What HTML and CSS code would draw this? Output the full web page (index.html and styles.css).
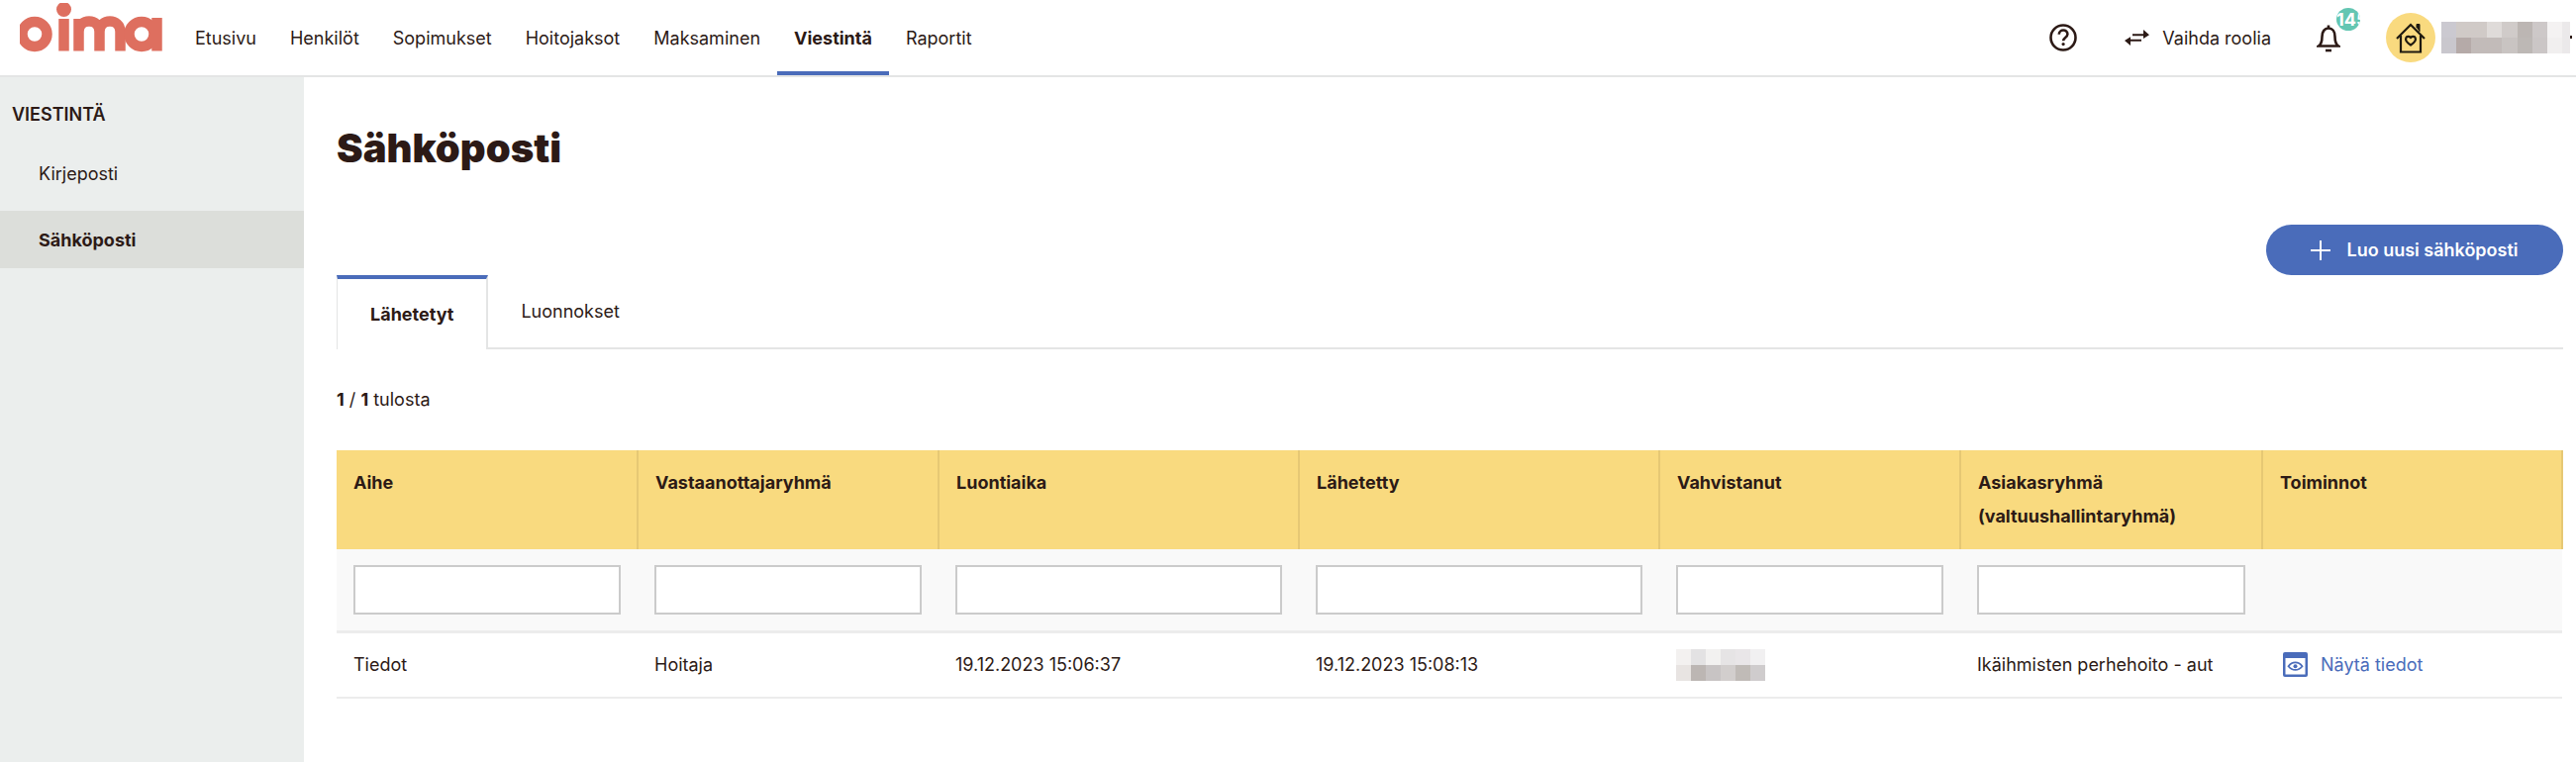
FILE: index.html
```html
<!DOCTYPE html>
<html lang="fi">
<head>
    <meta charset="UTF-8">
    <meta name="viewport" content="width=device-width, initial-scale=1.0">
    <title>Sähköposti</title>
    <link rel="stylesheet" href="styles.css">
</head>
<body>
    <header class="topbar">
        <a class="logo" href="#" aria-label="oima">
            <svg width="144" height="50" viewBox="20 4 144 50" fill="none" stroke="#de6f5f" stroke-width="10.5">
                <circle cx="35" cy="35.5" r="12.5"/>
                <circle cx="64.5" cy="10.5" r="7.5" fill="#de6f5f" stroke="none"/>
                <path d="M64.5 20V52.5"/>
                <path d="M79.5 52.5V20M79.5 33c0-14 21-14 21 0V52.5M100.500 33c0-14 21-14 21 0V52.500"/>
                <circle cx="143" cy="35.500" r="12.500"/>
                <path d="M158.500 19V52.500"/>
            </svg>
        </a>
        <nav class="mainnav">
            <a href="#">Etusivu</a>
            <a href="#">Henkilöt</a>
            <a href="#">Sopimukset</a>
            <a href="#">Hoitojaksot</a>
            <a href="#">Maksaminen</a>
            <a href="#" class="active">Viestintä</a>
            <a href="#">Raportit</a>
        </nav>
        <div class="usertools">
            <svg class="help" width="30" height="30" viewBox="0 0 30 30" fill="none" stroke="#2c1a16" stroke-width="2.6">
                <circle cx="15" cy="15" r="12.500"/>
                <path d="M10.800 11.800c0-5.600 8.600-5.600 8.600-.2 0 3.400-4.300 3.400-4.300 6.600"/>
                <circle cx="15.100" cy="21.600" r="1.600" fill="#2c1a16" stroke="none"/>
            </svg>
            <a href="#" class="rolelink">
                <svg width="25" height="18" viewBox="0 0 25 18" fill="#2c1a16">
                    <path d="M8 5.200H19V1L25 6.300 19 10V7.300H8Z"/>
                    <path d="M17 10.700V12.800H6V17L0 12 6 8.200V10.700Z"/>
                </svg>
                Vaihda roolia
            </a>
            <div class="bellwrap">
                <svg width="24" height="29" viewBox="0 0 24 29" fill="none" stroke="#2c1a16" stroke-width="2.600">
                    <path d="M2 22.500c3-2 3.500-5 3.500-9.500 0-5 2.500-8.500 6.500-8.500s6.500 3.500 6.500 8.500c0 4.500.5 7.500 3.500 9.500Z"/>
                    <path d="M12 1.500V4"/>
                    <path d="M9 27h6"/>
                </svg>
                <span class="badge">145</span>
            </div>
            <div class="avatar">
                <svg width="30" height="33" viewBox="0 0 30 33" fill="none" stroke="#1f1a10" stroke-width="2.200">
                    <path d="M1 17 15 3 29 17"/>
                    <path d="M5 14V30.500H25V14"/>
                    <path d="M21 6V2.500H24V10" fill="#1f1a10" stroke-width="1"/>
                    <path d="M15 23.500c-9-6-3.500-11 0-7.500 3.500-3.500 9 1.500 0 7.500Z"/>
                </svg>
            </div>
            <div class="blurname"></div>
            <span class="caret"></span>
        </div>
    </header>

    <div class="page">
        <aside class="sidebar">
            <h2>VIESTINTÄ</h2>
            <a href="#">Kirjeposti</a>
            <a href="#" class="active">Sähköposti</a>
        </aside>

        <main class="content">
            <h1>Sähköposti</h1>
            <div class="actions">
                <button class="newbtn">
                    <svg width="20" height="20" viewBox="0 0 20 20" stroke="#fff" stroke-width="2"><path d="M10 0V20M0 10H20"/></svg>
                    Luo uusi sähköposti
                </button>
            </div>
            <div class="tabs">
                <a href="#" class="tab active">Lähetetyt</a>
                <a href="#" class="tab">Luonnokset</a>
            </div>
            <p class="count"><b>1</b> / <b>1</b> tulosta</p>
            <table class="results">
                <colgroup>
                    <col class="c-narrow">
                    <col class="c-narrow">
                    <col class="c-wide">
                    <col class="c-wide">
                    <col class="c-narrow">
                    <col class="c-mid">
                    <col>
                </colgroup>
                <thead>
                    <tr>
                        <th>Aihe</th>
                        <th>Vastaanottajaryhmä</th>
                        <th>Luontiaika</th>
                        <th>Lähetetty</th>
                        <th>Vahvistanut</th>
                        <th>Asiakasryhmä (valtuushallintaryhmä)</th>
                        <th>Toiminnot</th>
                    </tr>
                    <tr class="filters">
                        <td><input type="text"></td>
                        <td><input type="text"></td>
                        <td><input type="text"></td>
                        <td><input type="text"></td>
                        <td><input type="text"></td>
                        <td><input type="text"></td>
                        <td></td>
                    </tr>
                </thead>
                <tbody>
                    <tr>
                        <td>Tiedot</td>
                        <td>Hoitaja</td>
                        <td>19.12.2023 15:06:37</td>
                        <td>19.12.2023 15:08:13</td>
                        <td><div class="blurcell"></div></td>
                        <td>Ikäihmisten perhehoito - aut</td>
                        <td>
                            <a href="#" class="showlink">
                                <svg width="25" height="25" viewBox="0 0 25 25">
                                    <rect width="25" height="25" rx="2" fill="#4a6cba"/>
                                    <rect x="2.500" y="6" width="20" height="16.500" fill="#fff"/>
                                    <path d="M5.500 14.200c4-5 10-5 14 0-4 5-10 5-14 0Z" fill="none" stroke="#4a6cba" stroke-width="1.800"/>
                                    <circle cx="12.500" cy="14.200" r="2" fill="#4a6cba"/>
                                </svg>
                                Näytä tiedot
                            </a>
                        </td>
                    </tr>
                </tbody>
            </table>
        </main>
    </div>
</body>
</html>
```

FILE: styles.css
```css
body {
    margin: 0;
    font-family: Inter, "Noto Sans", Arial, sans-serif;
    font-size: 18px;
    color: #2c1a16;
    background: #fff;
}

a {
    color: inherit;
    text-decoration: none;
}

.topbar {
    display: flex;
    align-items: center;
    height: 76px;
    border-bottom: 2px solid #e4e5e5;
    overflow: hidden;
}

.logo {
    display: flex;
    margin: 0 16px 0 20px;
    position: relative;
    top: -10px;
}

.mainnav {
    display: flex;
    height: 100%;
}

.mainnav a {
    display: flex;
    align-items: center;
    padding: 0 17px;
    box-sizing: border-box;
    border-bottom: 4px solid transparent;
    padding-top: 4px;
}

.mainnav a.active {
    font-weight: 700;
    border-bottom-color: #4a6cba;
}

.usertools {
    display: flex;
    align-items: center;
    margin-left: auto;
}

.help {
    margin-right: 47px;
}

.rolelink {
    display: flex;
    align-items: center;
    gap: 13px;
    margin-right: 46px;
}

.bellwrap {
    position: relative;
    width: 24px;
    height: 29px;
    margin-right: 46px;
}

.badge {
    position: absolute;
    left: 20px;
    top: -16px;
    width: 24px;
    height: 23px;
    border-radius: 50%;
    background: #63c6b2;
    color: #fff;
    font-size: 18px;
    font-weight: 700;
    line-height: 23px;
    white-space: nowrap;
    overflow: hidden;
}

.avatar {
    display: flex;
    align-items: center;
    justify-content: center;
    width: 50px;
    height: 50px;
    border-radius: 50%;
    background: #f9da7f;
    margin-right: 6px;
}

.blurname {
    width: 130px;
    height: 32px;
    background:
        linear-gradient(90deg, #cbc9d0 0 15px, #d0cac7 15px 46px, #dfdbd9 46px 61px, #d0cbc9 61px 77px, #bcb6b3 77px 92px, #cdc8c8 92px 107px, #f4f2f2 107px 122px, #ebe9ea 122px) top / 100% 50% no-repeat,
        linear-gradient(90deg, #c9c7cd 0 15px, #b5aaa8 15px 30px, #c2bbb9 30px 61px, #c9c4c2 61px 77px, #bdb8b5 77px 92px, #cbc6c6 92px 107px, #f1efef 107px 122px, #ebe9ea 122px) bottom / 100% 50% no-repeat;
}

.caret {
    width: 2px;
    height: 3px;
    margin: -1px 4px 0 0;
    background: #2c1a16;
}

.page {
    display: flex;
    min-height: 692px;
}

.sidebar {
    width: 307px;
    flex: none;
    padding-top: 27px;
    background: #ebeeed;
}

.sidebar h2 {
    margin: 0 0 19px;
    padding-left: 12px;
    font-size: 18px;
    font-weight: 600;
    line-height: 22px;
}

.sidebar a {
    display: flex;
    align-items: center;
    height: 58px;
    padding-left: 39px;
    margin-bottom: 9px;
}

.sidebar a.active {
    font-weight: 700;
    background: #dcdeda;
}

.content {
    flex: 1;
    min-width: 0;
    padding: 0 13px 0 33px;
}

h1 {
    margin: 48px 0 0;
    font-size: 40px;
    font-weight: 900;
    line-height: 48px;
}

.actions {
    display: flex;
    justify-content: flex-end;
    margin-top: 53px;
}

.newbtn {
    display: flex;
    align-items: center;
    justify-content: center;
    gap: 16px;
    width: 300px;
    height: 51px;
    border: none;
    border-radius: 26px;
    background: #4a6cba;
    color: #fff;
    font-family: inherit;
    font-size: 18px;
    font-weight: 600;
}

.tabs {
    display: flex;
    height: 75px;
    border-bottom: 2px solid #e4e5e5;
    box-sizing: border-box;
}

.tab {
    display: flex;
    align-items: center;
    padding: 0 33px;
    box-sizing: border-box;
}

.tab.active {
    font-weight: 700;
    border-top: 4px solid #4a6cba;
    border-left: 1px solid #e4e5e5;
    border-right: 2px solid #e4e5e5;
    margin-bottom: -2px;
    background: #fff;
}

.count {
    margin: 39px 0 0;
    line-height: 24px;
}

.results {
    width: 100%;
    margin-top: 39px;
    table-layout: fixed;
    border-collapse: collapse;
}

.c-narrow {
    width: 304px;
}

.c-wide {
    width: 364px;
}

.c-mid {
    width: 305px;
}

.results th {
    height: 100px;
    padding: 16px 17px;
    box-sizing: border-box;
    vertical-align: top;
    text-align: left;
    font-weight: 700;
    line-height: 34px;
    background: #f9da7f;
    border-right: 2px solid #e6c874;
}

.results td {
    padding: 0 17px;
}

.filters td {
    height: 83px;
    background: #f9f9f9;
    border-bottom: 3px solid #ececec;
    box-sizing: border-box;
}

.filters input {
    display: block;
    width: 100%;
    height: 50px;
    box-sizing: border-box;
    border: 2px solid #cbcbcb;
    background: #fff;
}

.results tbody td {
    height: 67px;
    box-sizing: border-box;
    border-bottom: 2px solid #ececec;
}

.blurcell {
    width: 90px;
    height: 32px;
    background:
        linear-gradient(90deg, #f3f1f0 0 15px, #e3e2e3 15px 30px, #f2f1f0 30px 45px, #e6e4e5 45px 60px, #e9e6e8 60px 75px, #f1f0f1 75px) top / 100% 50% no-repeat,
        linear-gradient(90deg, #e8e4e2 0 15px, #bcb6b3 15px 30px, #c8c4c4 30px 45px, #d2cecd 45px 60px, #c0bbb7 60px 75px, #cfcccd 75px) bottom / 100% 50% no-repeat;
}

.showlink {
    display: flex;
    align-items: center;
    gap: 13px;
    margin-left: 4px;
    color: #4a6cba;
}
```
